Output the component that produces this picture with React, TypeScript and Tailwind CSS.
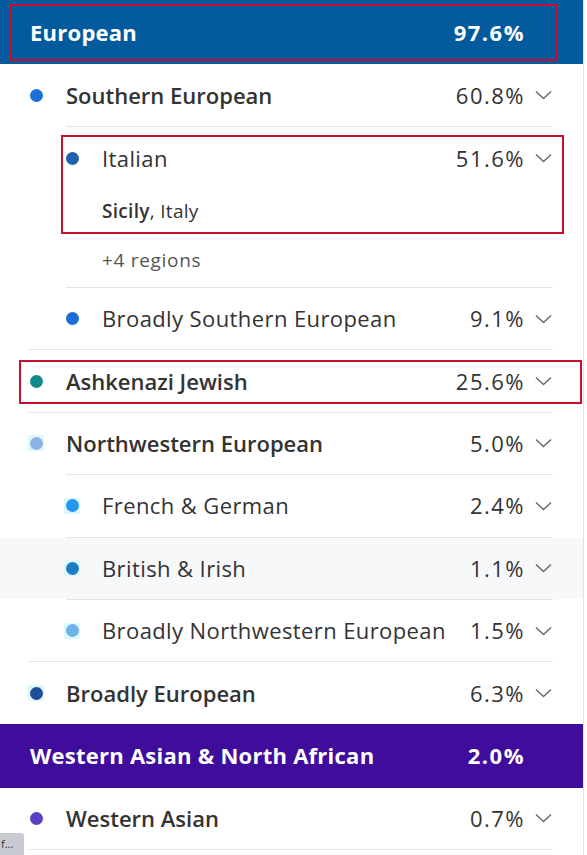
import React from 'react';

type Item = {
    label: string;
    pct: string;
    dot: string;
    level: 0 | 1;
    halo?: boolean;
    shaded?: boolean;
    first?: boolean;
};

const Chevron: React.FC = () => (
    <svg width="17" height="10" viewBox="0 0 17 10" className="ml-[10px] shrink-0">
        <polyline points="1,1.5 8.5,8.5 16,1.5" fill="none" stroke="#6b6b6b" strokeWidth="1.5" />
    </svg>
);

const Dot: React.FC<{ color: string; halo?: boolean }> = ({ color, halo }) => (
    <div className={`w-[16px] h-[16px] flex items-center justify-center shrink-0 ${halo ? 'bg-[#dff9fb]' : ''}`}>
        <div className="w-[13px] h-[13px] rounded-full" style={{ backgroundColor: color }} />
    </div>
);

const Row: React.FC<Item> = ({ label, pct, dot, level, halo, shaded, first }) => (
    <div className={`flex items-center pr-[31px] ${first ? 'h-[62px]' : 'h-[61.4px]'} ${shaded ? 'bg-[#f7f8fa]' : ''} ${level === 0 ? 'pl-[28px]' : 'pl-[64px]'}`}>
        <Dot color={dot} halo={halo} />
        <span className={`ml-[22px] flex-1 text-[22px] text-[#333] ${level === 0 ? 'font-semibold' : 'font-normal tracking-[0.4px]'}`}>
            {label}
        </span>
        <span className="text-[22px] text-[#333] tracking-[1.5px]">{pct}</span>
        <Chevron />
    </div>
);

const Divider: React.FC<{ deep?: boolean }> = ({ deep }) => (
    <div className={`h-px bg-[#e4e4e4] mr-[30px] ${deep ? 'ml-[66px]' : 'ml-[29px]'}`} />
);

const Header: React.FC<{ label: string; pct: string; bg: string }> = ({ label, pct, bg }) => (
    <div className={`h-[64px] flex items-center pl-[30px] pr-[58px] text-white ${bg}`}>
        <span className="flex-1 text-[22px] font-bold tracking-[0.25px]">{label}</span>
        <span className="text-[22px] font-bold tracking-[1.5px]">{pct}</span>
    </div>
);

const App: React.FC = () => {
    return (
        <div className="w-[587px] h-[855px] overflow-hidden bg-white relative" style={{ fontFamily: '"Open Sans", "Noto Sans", sans-serif' }}>
            <div className="w-[584px] border-r border-[#e2e2e2] min-h-full">
                <Header label="European" pct="97.6%" bg="bg-[#035a9d]" />

                <Row label="Southern European" pct="60.8%" dot="#1a72d6" level={0} first />
                <Divider deep />

                {/* Italian block */}
                <div className="h-[160px]">
                    <Row label="Italian" pct="51.6%" dot="#1f62b0" level={1} first />
                    <div className="h-[44px] flex items-center pl-[102px] text-[19px] tracking-[0.3px] text-[#333]">
                        <span className="font-semibold">Sicily</span>
                        <span>, Italy</span>
                    </div>
                    <div className="h-[54px] flex items-center pl-[102px] text-[19px] tracking-[0.7px] text-[#555]">
                        +4 regions
                    </div>
                </div>
                <Divider deep />

                <Row label="Broadly Southern European" pct="9.1%" dot="#1a6fd6" level={1} />
                <Divider />
                <Row label="Ashkenazi Jewish" pct="25.6%" dot="#138a8a" level={0} />
                <Divider />
                <Row label="Northwestern European" pct="5.0%" dot="#8fb2e6" level={0} halo />
                <Divider deep />
                <Row label="French & German" pct="2.4%" dot="#2496ef" level={1} halo />
                <Divider deep />
                <Row label="British & Irish" pct="1.1%" dot="#1f7cc2" level={1} halo shaded />
                <Divider deep />
                <Row label="Broadly Northwestern European" pct="1.5%" dot="#6eb3ea" level={1} halo />
                <Divider />
                <Row label="Broadly European" pct="6.3%" dot="#1e4e98" level={0} halo />

                <Header label="Western Asian & North African" pct="2.0%" bg="bg-[#3f0c9c]" />

                <Row label="Western Asian" pct="0.7%" dot="#5a40c2" level={0} />
                <Divider />
            </div>

            {/* annotation boxes */}
            <div className="absolute left-[10px] top-[4px] w-[548px] h-[57px] border-2 border-[#c8102e] pointer-events-none" />
            <div className="absolute left-[61px] top-[135px] w-[503px] h-[99px] border-2 border-[#c8102e] pointer-events-none" />
            <div className="absolute left-[19px] top-[360px] w-[563px] h-[44px] border-2 border-[#c8102e] pointer-events-none" />

            {/* truncated tooltip tab */}
            <div className="absolute left-0 bottom-0 w-[24px] h-[22px] bg-[#c9cbd3] rounded-tr-[3px] text-[11px] text-[#333] leading-[22px] pl-[1px] overflow-hidden">
                f...
            </div>
        </div>
    );
};

export default App;
